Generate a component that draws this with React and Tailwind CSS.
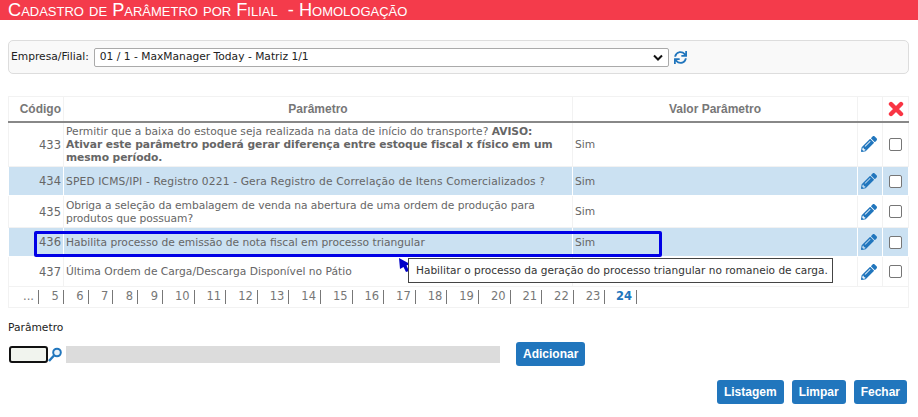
import { FaPencilAlt, FaSync } from "react-icons/fa";

const rows = [
  {
    code: 433,
    height: "h-[45px]",
    text: (
      <>
        Permitir que a baixa do estoque seja realizada na data de início do transporte? <b className="tracking-[-0.06px]">AVISO: Ativar este parâmetro poderá gerar diferença entre estoque fiscal x físico em um mesmo período.</b>
      </>
    ),
  },
  { code: 434, height: "h-[29px]", text: "SPED ICMS/IPI - Registro 0221 - Gera Registro de Correlação de Itens Comercializados ?", shaded: true, track: "tracking-[0.14px]" },
  { code: 435, height: "h-[32px]", text: "Obriga a seleção da embalagem de venda na abertura de uma ordem de produção para produtos que possuam?", track: "tracking-[-0.05px]" },
  { code: 436, height: "h-[29px]", text: "Habilita processo de emissão de nota fiscal em processo triangular", shaded: true },
  { code: 437, height: "h-[30px]", text: "Última Ordem de Carga/Descarga Disponível no Pátio", noValue: true },
];

const pages = ["...", 5, 6, 7, 8, 9, 10, 11, 12, 13, 14, 15, 16, 17, 18, 19, 20, 21, 22, 23, 24];

const btn = "h-6 rounded-[3px] bg-[#2176bd] px-[7px] text-[12px] font-bold text-white font-['Liberation_Sans',sans-serif]";

export default function App() {
  return (
    <div className="relative h-[417px] w-[918px] overflow-hidden bg-white font-['DejaVu_Sans',sans-serif] text-[10.7px] text-[#666]">
      <div className="h-5 bg-[#f43b4b] pl-2 font-['Liberation_Sans',sans-serif] text-[18.2px] leading-[20px] whitespace-pre text-white [font-variant:small-caps]">
        Cadastro de Parâmetro por Filial  - Homologação
      </div>

      <div className="mx-2 mt-5 flex h-[34px] w-[901px] items-center rounded-[5px] border border-[#ddd] bg-[#f9f9f9] pl-[2px]">
        <span className="text-[#222]">Empresa/Filial:</span>
        <div className="ml-[5px] flex h-[19px] w-[575px] items-center justify-between rounded-[2px] border border-[#aaa] bg-white pr-[5px] pl-[5px] text-[#222]">
          <span>01 / 1 - MaxManager Today - Matriz 1/1</span>
          <svg width="10" height="7" viewBox="0 0 10 7">
            <path d="M1 1.5l4 4 4-4" fill="none" stroke="#111" strokeWidth="2" />
          </svg>
        </div>
        <FaSync className="ml-[5px] text-[13px] text-[#2176bd]" />
      </div>

      <table className="mt-[22px] ml-2 w-[900px] table-fixed border-collapse">
        <colgroup>
          <col className="w-[55px]" />
          <col className="w-[509px]" />
          <col className="w-[285px]" />
          <col className="w-[25px]" />
          <col className="w-[26px]" />
        </colgroup>
        <thead>
          <tr className="h-[25px] border-b-2 border-[#888] font-['Liberation_Sans',sans-serif] text-[12px] font-bold text-[#777]">
            <th className="border border-b-0 border-[#f2f2f2] pr-[2px] text-right">Código</th>
            <th className="border border-b-0 border-[#f2f2f2]">Parâmetro</th>
            <th className="border border-b-0 border-[#f2f2f2]">Valor Parâmetro</th>
            <th className="border border-b-0 border-[#f2f2f2]" />
            <th className="border border-b-0 border-[#f2f2f2]">
              <svg className="mx-auto" width="16" height="16" viewBox="0 0 16 16">
                <path d="M3 3l10 10M13 3L3 13" stroke="#f93544" strokeWidth="4.4" strokeLinecap="round" />
              </svg>
            </th>
          </tr>
        </thead>
        <tbody>
          {rows.map((row) => {
            const cell = row.shaded ? "border border-white bg-[#cbe1f2]" : "border border-[#f2f2f2]";
            return (
              <tr key={row.code} className={row.height}>
                <td className={`${cell} pt-[2px] pr-[2px] text-right text-[11.5px]`}>{row.code}</td>
                <td className={`${cell} px-[2px] leading-[13px] ${row.track || ""}`}>{row.text}</td>
                <td className={`${cell} px-[2px] pt-[2px]`}>{row.noValue ? "" : "Sim"}</td>
                <td className={cell}>
                  <FaPencilAlt className="ml-[3px] text-[16px] text-[#2176bd]" />
                </td>
                <td className={cell}>
                  <div className="mx-auto h-[13px] w-[13px] rounded-[2px] border border-[#767676] bg-white" />
                </td>
              </tr>
            );
          })}
          <tr className="h-[21px]">
            <td colSpan={5} className="border border-[#f2f2f2] pl-[12px] text-[11.5px] text-[#777]">
              <div className="flex">
                {pages.map((page) => (
                  <span
                    key={page}
                    className={`flex h-[14px] items-center justify-end border-r border-[#777] pr-[4px] ${page === "..." ? "w-[18px]" : page < 10 ? "w-[24.8px]" : "w-[31.6px]"} ${page === 24 ? "font-bold text-[#2176bd]" : ""}`}
                  >
                    {page}
                  </span>
                ))}
              </div>
            </td>
          </tr>
        </tbody>
      </table>

      <div className="mt-[12px] ml-2 text-[#222]">Parâmetro</div>

      <div className="mt-[6px] ml-[9px] flex items-center">
        <div className="h-[17px] w-[39px] rounded-[3px] border-2 border-[#111] bg-[#f1f4ee]" />
        <svg width="14" height="15" viewBox="0 0 14 15">
          <circle cx="9" cy="5.5" r="3.8" fill="#e8f2fa" stroke="#2176bd" strokeWidth="2" />
          <path d="M6 8.5L1 14" stroke="#2176bd" strokeWidth="2.4" />
        </svg>
        <div className="ml-1 h-[17px] w-[434px] bg-[#dcdcdc]" />
        <button className={`${btn} ml-[16px]`}>Adicionar</button>
      </div>

      <div className="mt-[14px] mr-[11px] flex justify-end gap-2">
        <button className={btn}>Listagem</button>
        <button className={`${btn} w-[54px] px-0`}>Limpar</button>
        <button className={btn}>Fechar</button>
      </div>

      {/* overlays: highlight box, cursor and tooltip */}
      <div className="absolute top-[231px] left-[34px] h-[26px] w-[628px] rounded-[2px] border-[3px] border-[#0000e6]" />
      <svg className="absolute top-[257px] left-[398px]" width="14" height="16" viewBox="0 0 14 16">
        <path d="M1 1l11 6-3.5 1.5L11 14l-3 1-2.5-5L2 12z" fill="#0000c8" />
      </svg>
      <div className="absolute top-[258px] left-[408px] flex h-[25px] w-[425px] items-center border border-[#444] bg-white pl-[7px] text-[10.55px] whitespace-nowrap text-[#333]">
        Habilitar o processo da geração do processo triangular no romaneio de carga.
      </div>
    </div>
  );
}
